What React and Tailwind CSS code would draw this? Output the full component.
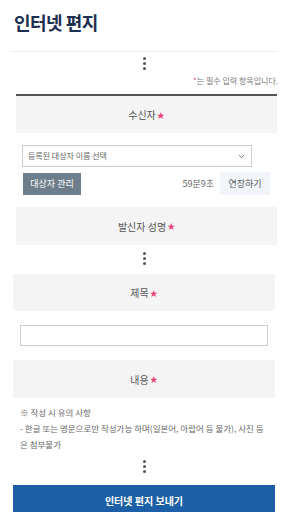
import { FiChevronDown } from 'react-icons/fi'

const font = { fontFamily: '"Noto Sans CJK KR", "Noto Sans", sans-serif' }

const Dots = ({ className = '' }) => (
  <div className={`flex flex-col items-center gap-[2px] ${className}`}>
    <span className="w-[3px] h-[3px] rounded-full bg-[#555]" />
    <span className="w-[3px] h-[3px] rounded-full bg-[#555]" />
    <span className="w-[3px] h-[3px] rounded-full bg-[#555]" />
  </div>
)

const Star = () => <span className="text-[#e9407a] text-[8px] ml-[1px]">★</span>

const Label = ({ children, className = '' }) => (
  <div
    className={`bg-[#f4f4f4] flex items-center justify-center text-[10px] text-[#555] ${className}`}
  >
    {children}
    <Star />
  </div>
)

const App = () => {
  return (
    <div className="w-[288px] h-[512px] overflow-hidden bg-white" style={font}>
      {/* title */}
      <div className="h-[51px] px-[14px] pt-[9px]">
        <h1 className="text-[18px] font-bold text-[#1d2f50] leading-[26px] tracking-[-0.5px]">
          인터넷 편지
        </h1>
      </div>
      <div className="mx-[12px] border-t border-[#ececec]" />

      <Dots className="mt-[5px]" />
      <p className="text-right pr-[10px] mt-[5px] text-[8px] text-[#777] leading-[12px]">
        <span className="text-[#e9407a]">*</span>는 필수 입력 항목입니다.
      </p>

      {/* receiver */}
      <div className="mt-[7px] mx-[16px] mr-[11px] border-t-2 border-[#555]">
        <Label className="h-[37px]">수신자</Label>
      </div>

      <div className="px-[22px] pr-[36px] mt-[12px]">
        <div className="h-[22px] border border-[#ccc] flex items-center justify-between px-[5px] text-[8px] text-[#666]">
          <span>등록된 대상자 이름 선택</span>
          <FiChevronDown className="text-[9px] text-[#444]" />
        </div>
      </div>
      <div className="flex items-center justify-between pl-[23px] pr-[18px] mt-[5px]">
        <button className="h-[22px] w-[58px] bg-[#6d7d8b] text-white text-[9px]">대상자 관리</button>
        <div className="flex items-center gap-[6px]">
          <span className="text-[9px] text-[#666]">59분9초</span>
          <button className="h-[23px] w-[50px] bg-[#f1f4f8] text-[9px] text-[#555]">연장하기</button>
        </div>
      </div>

      {/* sender */}
      <div className="mt-[12px] mx-[16px] mr-[11px]">
        <Label className="h-[38px]">발신자 성명</Label>
      </div>
      <Dots className="mt-[7px]" />

      {/* subject */}
      <div className="mt-[9px] mx-[13px]">
        <Label className="h-[37px]">제목</Label>
      </div>
      <div className="mx-[20px] mt-[14px] h-[21px] border border-[#ccc]" />

      {/* content */}
      <div className="mt-[14px] mx-[13px]">
        <Label className="h-[38px]">내용</Label>
      </div>

      <div className="px-[20px] mt-[6px] text-[8.5px] text-[#666] leading-[16px]">
        <p>※ 작성 시 유의 사항</p>
        <p>- 한글 또는 영문으로만 작성가능 하며(일본어, 아랍어 등 불가), 사진 등 은 첨부불가</p>
      </div>
      <Dots className="mt-[8px]" />

      <button className="mt-[12px] mx-[13px] w-[262px] h-[30px] bg-[#1b5fa6] text-white text-[10px] font-bold">
        인터넷 편지 보내기
      </button>
    </div>
  )
}

export default App
